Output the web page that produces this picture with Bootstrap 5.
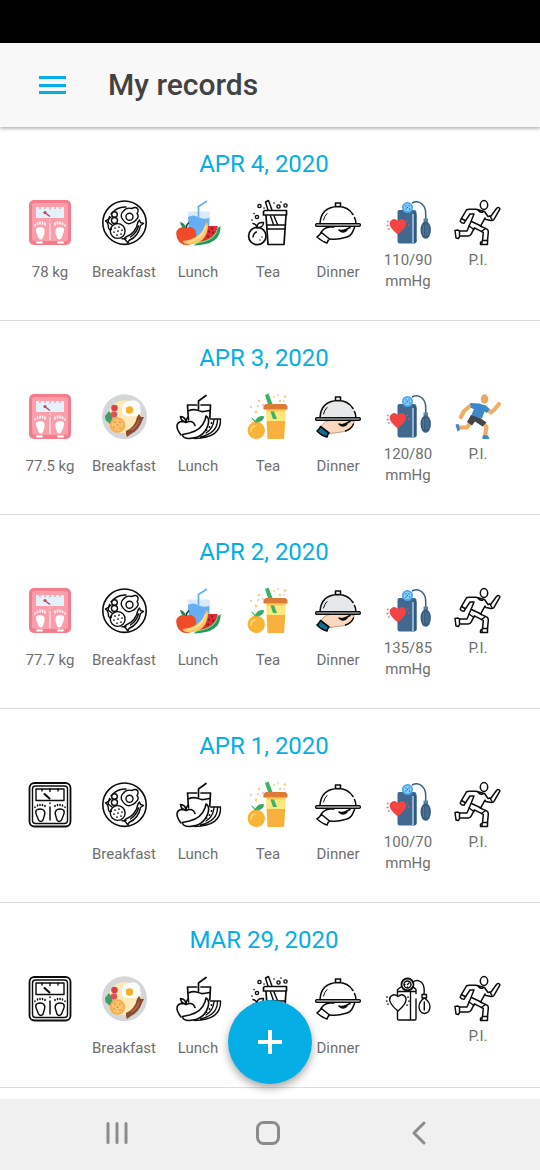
<!DOCTYPE html>
<html lang="en">
<head>
<meta charset="utf-8">
<meta name="viewport" content="width=device-width, initial-scale=1">
<title>My records</title>
<link href="https://cdn.jsdelivr.net/npm/bootstrap@5.3.0/dist/css/bootstrap.min.css" rel="stylesheet">
<style>
  :root { --accent: #05aee4; }
  body { font-family: Roboto, "Liberation Sans", sans-serif; background: #fff; color: #6f6f6f; }
  .status-strip { height: 43px; background: #000; }
  .app-header { height: 84px; background: #f8f8f8; padding-left: 36px; gap: 39px; box-shadow: 0 1px 4px rgba(0,0,0,.4); }
  .app-title { font-size: 30px; line-height: 36px; font-weight: 500; color: #424242; }
  .icon-btn { background: none; border: 0; padding: 0; line-height: 0; }
  .day { padding: 21px 27px 28px 15px; border-bottom: 1px solid #dcdcdc; }
  .day-title { font-size: 24px; line-height: 32px; font-weight: 400; color: var(--accent); margin-bottom: 19px; }
  .day-grid { display: grid; grid-template-columns: 35fr 39fr repeat(5, 35fr); }
  .entry { display: flex; flex-direction: column; align-items: center; text-align: center; font-size: 15px; line-height: 21px; white-space: nowrap; }
  .entry svg { width: 48px; height: 48px; margin-bottom: 3px; }
  .low { margin-top: 12px; }
  .fab { position: fixed; left: 50%; bottom: 86px; margin-left: -42px; width: 84px; height: 84px; border-radius: 50%; background: var(--accent); box-shadow: 0 4px 8px rgba(0,0,0,.35); z-index: 5; }
  .system-nav { height: 71px; background: #f0f0f0; padding: 0 45px 4px 41px; }
  .ln { fill: none; stroke: #0c0c0c; stroke-width: 1.4; stroke-linecap: round; stroke-linejoin: round; }
</style>
</head>
<body>

<svg width="0" height="0" class="position-absolute" aria-hidden="true">
  <defs>
    <!-- bathroom scale -->
    <g id="feet">
      <path d="M10.500 29q3.500-2 7 0q2 2 1 5l-1.500 5q-2 3-4.500 0l-2-5q-1.500-3 0-5z"/>
      <path d="M37.500 29q-3.500-2-7 0q-2 2-1 5l1.500 5q2 3 4.500 0l2-5q1.500-3 0-5z"/>
    </g>
    <symbol id="scale-c" viewBox="0 0 48 48">
      <rect x="3" y="1" width="42" height="45" rx="5" fill="#f47c8b"/>
      <rect x="6" y="4" width="36" height="38" rx="3" fill="#fc9dab"/>
      <rect x="10" y="8" width="28" height="11" fill="#e2f1fa"/>
      <path d="M14 8v2M19 8v2M24 8v2.500M29 8v2M34 8v2" stroke="#f07b8c" fill="none"/>
      <path d="M18 13l6 4.500" stroke="#c94660" stroke-width="1.500"/><circle cx="19" cy="13.500" r="1.600" fill="#c94660"/>
      <use href="#feet" fill="#fff"/>
      <path d="M9 27v-1M11.500 25.500v-1.500M14 25v-2M16.500 25v-2M19 26v-2M29 26v-2M31.500 25v-2M34 25v-2M36.500 25.500v-1.500M39 27v-1" stroke="#fff" stroke-width="1.500" stroke-linecap="round"/>
      <path d="M24 24v17M24 20.500v1.500" stroke="#ffe9ec" stroke-width="1.300"/>
      <path d="M11 43.500h5M32 43.500h5" stroke="#fff" stroke-width="1.800" stroke-linecap="round"/>
    </symbol>
    <symbol id="scale-o" viewBox="0 0 48 48">
      <g class="ln">
        <rect x="3.500" y="2" width="41" height="43.500" rx="5" stroke-width="1.800"/>
        <rect x="6.500" y="5" width="35" height="37.500" rx="3"/>
        <rect x="10" y="8" width="28" height="11.500"/>
        <path d="M16 8v2M24 8v2.500M32 8v2"/><path d="M18.500 13l5 4.500" stroke-width="2"/>
        <use href="#feet"/>
        <path d="M9 26.500v-.5M11.500 25v-1M14 24.500v-1M16.500 24.500v-1M19 25.500v-1M29 25.500v-1M31.500 24.500v-1M34 24.500v-1M36.500 25v-1M39 26.500v-.5M24 22v.5M24 26v13" stroke-width="1.500"/>
      </g>
    </symbol>

    <!-- breakfast plate -->
    <symbol id="breakfast-o" viewBox="0 0 48 48">
      <g class="ln">
        <circle cx="24.500" cy="23.700" r="21.700" stroke-width="1.600"/>
        <path d="M11 15q6-7.500 15-7M9.500 17.500q-1 2.500-1.200 5M26 39.500q-2 .6-4 .3"/>
        <circle cx="29.500" cy="17.700" r="3.500"/>
        <path d="M23.500 12q3-4 8-2.500l3-1q3-.5 3.500 2.500q.5 2-1 3.500q2.500 3-.5 6t-4 3q-4 2.500-7 0t-4-5q-1-4 2-6.500z"/>
        <circle cx="14.500" cy="15.500" r="2.800"/><circle cx="14.500" cy="21.500" r="3"/>
        <path d="M11 18q-3 3-5.500 4q3 2 3 7q1.500 3 3 1M8 23l4 3"/>
        <circle cx="17.700" cy="32" r="7.400"/>
        <path d="M15 29v.1M19 28v.1M22 31v.1M18 32v.1M14 33v.1M21 35v.1M17 36v.1" stroke-width="1.700"/>
        <path d="M26 38q10-4 12-15l1.500-2l1 2.500l3 1l-3 2q-2 11-11.500 15l-1 2.500l-2-2.500l-2-2zM30.500 38q6-4 8-11"/>
      </g>
    </symbol>
    <symbol id="breakfast-c" viewBox="0 0 48 48">
      <circle cx="24.500" cy="23.700" r="22.500" fill="#d4d6d8"/>
      <circle cx="24.500" cy="23.700" r="16.500" fill="#fbeab8"/>
      <path d="M9 18q3 3 4 10q-3 5-5 1q-3-1-3-6z" fill="#459a67"/>
      <circle cx="14.500" cy="15" r="3.300" fill="#d9404b"/><circle cx="14" cy="21.500" r="3.200" fill="#e35252"/>
      <path d="M22 14q2-6 8-6q5-2 8 1t2 6q2 4-1 7q-5 2-9 1q-6 1-8-4z" fill="#fff"/>
      <circle cx="29.500" cy="17" r="3.800" fill="#f8b227"/>
      <circle cx="17.500" cy="32" r="7.700" fill="#f5ad4d"/><circle cx="17.500" cy="32" r="6" fill="#fdc26b"/>
      <path d="M15 29v.1M20 29v.1M17.500 32v.1M14 34v.1M20 35v.1" stroke="#d68132" stroke-width="1.600" stroke-linecap="round"/>
      <path d="M26 38q9-4 11-14l2-3l2 3h3l-2 4q-3 9-11 13l-4 3l-1-3z" fill="#8c4b31"/>
      <path d="M31 37q6-3 8-10" stroke="#b0694b" fill="none" stroke-width="1.500"/>
    </symbol>

    <!-- lunch: juice and fruit -->
    <symbol id="lunch-c" viewBox="0 0 48 48">
      <path d="M13.500 12.500h22.500l-1.500 27h-19z" fill="#d9ebfa"/>
      <path d="M14 18q5-3 10 0t11.500 1l-1 21h-19z" fill="#66aef3"/>
      <path d="M24.500 18V7.500L33 2" fill="none" stroke="#66aef3" stroke-width="1.700"/>
      <path d="M46.500 27q1 19-27 19.500z" fill="#1d9a61"/><path d="M44 27.500q0 14-21 17l11-18z" fill="#86d36b"/>
      <path d="M43.500 27q-1 13-19 16l10-16z" fill="#e02d3b"/>
      <path d="M38 29v1M35 32v1M39 33v1M34 37v1" stroke="#501923" stroke-width="1.300" stroke-linecap="round"/>
      <path d="M12 29q7-3 10 4q2 10-7 13q-9 1-12-7q-3-9 5-11q3 0 4 1z" fill="#f04b28"/>
      <path d="M12 29q0-3 3-5.500" fill="none" stroke="#213d31" stroke-width="1.600"/>
      <path d="M6 23q5 1 6 6q-5 0-6-6z" fill="#1d8b57"/>
      <path d="M32 23q3 2 1.500 8q-3 14-19 14.500q-5-.5-6-3.500q15-1 22-13z" fill="#fcc665"/>
      <path d="M31.500 27q-3 13-18 16" stroke="#ffdf91" fill="none" stroke-width="1.500"/>
    </symbol>
    <symbol id="lunch-o" viewBox="0 0 48 48">
      <g class="ln">
        <path d="M24.500 16V8L32 2.500M13.500 12h9M27 12h9.500l-.7 13M13.500 12l1 15M14 18q5-2 8.500-1t5 1.500t8-1" stroke-width="1.700"/>
        <path d="M36.500 26H46.500q1 19-26 19.500M43.500 27q0 13-17 17M40 27q-1 9-8 13"/>
        <path d="M37.500 30v.2M35.500 34v.2M32.500 37v.2" stroke-width="1.800"/>
        <path d="M7 42q-8-11 0-13.500q3 0 5 1q7-3 9 3M12 29q0-3 2-5M12 29q-5-.5-5.500-5.500q5 .5 5.500 5.500" stroke-width="1.600"/>
        <path d="M32 23q4 2 2 9q-4 13-19 13.500q-6 0-6.500-4l7-1.500q12-3 15.500-13z" stroke-width="1.600"/>
      </g>
    </symbol>

    <!-- tea: cup with straw and orange -->
    <symbol id="tea-o" viewBox="0 0 48 48">
      <g class="ln" stroke-width="1.600">
        <path d="M20.500 11.500h22v4.500h-23v-3.500zM22 16.500l2 29h16l2-29M23 26h18M23 30h18" style="stroke-width:1.700"/>
        <path d="M24 11l-2.500-8l3-1.500l3.500 9.500M26.500 17l3 8.500M30 17l3.500 8.500"/>
        <circle cx="13.300" cy="37" r="8.700" style="stroke-width:1.700"/>
        <path d="M13 28q0-5 6.500-4.500q0 5-6.500 5.500q-.5-4-4-4.500M9 38q.5-4 3.500-5M16 41v.1M18 38v.1"/>
        <circle cx="15.500" cy="7" r="1.600"/><circle cx="34.500" cy="7.500" r="1.600"/><circle cx="41.500" cy="6.500" r="1.600"/><circle cx="13" cy="18" r="1.600"/>
        <path d="M8 21v.1M20 9v.1M10 14.500v.1M37 3v.1M30 4v.1" style="stroke-width:1.600"/>
      </g>
    </symbol>
    <symbol id="tea-c" viewBox="0 0 48 48">
      <path d="M22 16h20l-2 30H23.500z" fill="#fce87d"/><path d="M22.700 28h18.500L40 46H23.500z" fill="#f8b13f"/>
      <path d="M24 11l-3-9l3.500-1.500l4 10.500zM26 17l3 9h4l-3.500-9z" fill="#3ab267"/>
      <path d="M21.500 11h20l2 2v3.500h-24V13z" fill="#db7b35"/><path d="M23 17h18v1.500H23z" fill="#f7ca53"/>
      <circle cx="12.300" cy="37.300" r="8.700" fill="#f9b437"/>
      <path d="M7 38q0-4 4-5" fill="none" stroke="#ffdc79" stroke-width="1.700" stroke-linecap="round"/>
      <path d="M11 29q2-6 8.500-5.500q0 5.500-8.500 5.500zM11 29q-1-3-3.500-4" fill="#36ad65" stroke="#36ad65"/>
      <g fill="#f8cf75"><circle cx="15" cy="8" r="1.200"/><circle cx="36" cy="8" r="1.200"/><circle cx="41" cy="3.500" r="1.300"/><circle cx="12" cy="19" r="1.400"/><circle cx="30" cy="4" r=".9"/></g>
      <g fill="#efafc2"><circle cx="7" cy="14" r=".9"/><circle cx="19" cy="12" r=".9"/><circle cx="34" cy="2" r=".8"/><circle cx="14" cy="13" r=".9"/><circle cx="40" cy="8" r=".8"/></g>
    </symbol>

    <!-- dinner: cloche on a hand -->
    <g id="cloche" class="ln">
      <path d="M21.500 7V4h5v3M40.500 18.500q1.500 3 1.300 6M6 24.500Q7 8 24 7.500q10 0 15 8" stroke-width="1.600"/>
      <path d="M9.500 21q1-4 3.500-6.500" stroke-width="1"/>
    </g>
    <symbol id="dinner-o" viewBox="0 0 48 48">
      <use href="#cloche"/>
      <g class="ln">
        <rect x="1.700" y="24.700" width="44.600" height="2.600" rx="1" fill="#fff"/>
        <path d="M7 33.500q3-5 9-5.500h4M16 40q8 1 15-1.500q6-1 8-6.500l1.500-3.500M25 31q3 1.500 7-.5l4-2M25 31q4 4 8 0" stroke-width="1.600"/>
        <path d="M7.500 33.500l8 6.500q-1.500 1-2.500 4q-4-1-10-6q2-1.500 4.500-4.500z" stroke-width="1.600"/>
      </g>
    </symbol>
    <symbol id="dinner-c" viewBox="0 0 48 48">
      <path d="M6 24.500Q7 8 24 7.500t18 17z" fill="#e7e8e9"/>
      <use href="#cloche"/>
      <g class="ln">
        <path d="M7 34q3-6 9-6.500h16l8.500 1l-2 4q-2 5-8 6t-15 2z" fill="#fbd7bd" stroke="#c99b80" stroke-width="1"/>
        <path d="M25 31q3 1.500 7-.5l4-2M25 31q4 4 8 0M39.500 31q-2 5-8 7"/>
        <rect x="1.700" y="24.700" width="44.600" height="2.600" rx="1" fill="#d9dadb"/>
        <path d="M6.500 33.500l8.500 6.500q-1.500 1-2 4q-5-1-10-6q2-1.500 3.500-4.500z" fill="#146d96" stroke-width="1.600"/>
      </g>
    </symbol>

    <!-- blood pressure monitor -->
    <symbol id="bp-c" viewBox="0 0 48 48">
      <path d="M28 4q6-3 10 1t3.700 10v6" fill="none" stroke="#39607f" stroke-width="1.500"/>
      <path d="M15 11h15q2.500 0 2.500 3v28q0 2.500-2.500 2.500H15.500q-2 0-2-2.500V13q0-2 1.500-2z" fill="#41688f"/>
      <path d="M13.500 15h16V12l3 3v28l-3 1.500V15" fill="#315a80"/>
      <path d="M29 15v29" stroke="#bfe0f4" stroke-width="1.300"/>
      <circle cx="23.500" cy="8.500" r="5.500" fill="#4ca5ec"/><circle cx="23.500" cy="8.500" r="3.800" fill="#85d1ff"/>
      <path d="M22 7v.1M25 7v.1M22 10v.1M25.500 10v.1M23.500 8.500v.1" stroke="#176ac5" stroke-width="1.300" stroke-linecap="round"/>
      <path d="M39.500 19.500h4.500V23h-4.500z" fill="#5285ac"/><ellipse cx="41.700" cy="31" rx="5.200" ry="8.700" fill="#375d80"/>
      <path d="M39.500 26v10M42 25v12M44 26v10" stroke="#527ba0"/>
      <path d="M14 35.500Q3 27 6.500 22q3.500-4 7.500 0q4-4 7.500 0q3 5-7.500 13.500z" fill="#f34343"/>
      <path d="M4.500 22.500H2.500M4.500 26.500H2M5.500 30H3.500M23 22h2M24 26h2" stroke="#dc5262" stroke-width="1.400" stroke-dasharray="1.300 .8"/>
    </symbol>
    <symbol id="bp-o" viewBox="0 0 48 48">
      <g class="ln" transform="translate(2 0)">
        <circle cx="21.500" cy="9.500" r="6" stroke-width="1.800"/><circle cx="21.500" cy="9.500" r="3.500"/>
        <path d="M21.500 9.500l1.500-1.500M18.500 9.500h.5M21.500 12v.3"/>
        <path d="M27 7q4-3 8 0t3 12M15 12l-3.500 2.500V20M11.500 16.500H30M28 12.500l2 2v4M11.500 36v8q0 1 1.500 1h16q1 0 1-1.500V24M24.500 17v27M28 12.500h-2"/>
        <path d="M36 19.500h4.500V23H36zM38.300 23q-5.500 4-5.300 9q.5 6 5.500 6.500q5-.5 5.500-6.500q0-5-5.700-9M38.300 27v8"/>
        <path d="M12 36Q1 27 4.500 21.500q4-3.500 7.500 0q4-3.500 7 0q4 5-7 14.500z" fill="#fff"/>
        <path d="M1 22v.1M0.800 26v.1M2 29v.1M22 22v.1M23 26v.1M21 30v.1" stroke-width="1.700"/>
      </g>
    </symbol>

    <!-- physical activity: runner -->
    <symbol id="run-o" viewBox="0 0 48 48">
      <g class="ln" style="stroke-width:1.500">
        <ellipse cx="30" cy="6" rx="3.700" ry="4.400"/>
        <path d="M15 10.300h7l8.500 2.200l3.500 5l3-.5l5.500-7.500q2-2 3.500.3l-6 10.500q-1 1.500-3 1.300l-5-1l-1-1.500l-4.500 8l6.500 3q1.500 1 1.300 3l-.8 8.500v3.800h-7v-2l2-1.500l.8-8.500l-9-4.500l-3 6q-1 2-3 2H6l-1.500 2.500L2 39l-1-7.500l3-.5l1.500 1h7.500l4-9.500l3-7.500h-4l-5 7.500l-1 1.800q-2.500 0-3.800-2l1.300-3l5-8.500z"/>
        <path d="M17.500 22.500l7.500 3.500l2.500 1.500M15 27l5 3.500M27.500 32.500l4-3M5.500 32v4.500M29 41.500h4.500M7.500 19.500l3.500 2M36 17l2 3.500M28 43.500v1M24 11q2 3 5 2"/>
      </g>
    </symbol>
    <symbol id="run-c" viewBox="0 0 48 48">
      <ellipse cx="30.500" cy="6" rx="3.800" ry="4.700" fill="#e8a765"/>
      <g fill="none" stroke="#f0ad69" stroke-width="4.200" stroke-linecap="round" stroke-linejoin="round">
        <path d="M16 13l-6 5l-3 6M33 16l4 3.500l3-2.500l5-6M17 29l-4 5.500H5M30 31l2.500 3l-1.500 9"/>
      </g>
      <path d="M16 10l9 .5l7 2l3.500 4l-2.500 3.500l-2.500-1.500l-2.500 7L17 23l3-7l-3-1z" fill="#3b88cc"/>
      <path d="M17 22l10 3.500l5.500 4l-4 4l-7.500-5l-3 4l-5-3.500z" fill="#434549"/>
      <path d="M1.500 31.500l3-.5l1.500 6l-2.500 1.500zM28.500 46v-3l1.500-1l4 .5l1.500 3.500z" fill="#3b88cc"/>
    </symbol>
  </defs>
</svg>

<div class="d-flex flex-column min-vh-100">
  <div class="status-strip"></div>
  <header class="app-header d-flex align-items-center">
    <button type="button" class="icon-btn" aria-label="Open menu">
      <svg width="33" height="24" viewBox="0 0 33 24" fill="#05aee4"><path d="M3 3h27v3H3zM3 11h27v3H3zM3 18h27v3H3z"/></svg>
    </button>
    <h1 class="app-title mb-0">My records</h1>
  </header>

  <main>
    <section class="day">
      <h2 class="day-title text-center">APR 4, 2020</h2>
      <div class="day-grid">
        <div class="entry"><svg><use href="#scale-c"/></svg><span class="low">78 kg</span></div>
        <div class="entry"><svg><use href="#breakfast-o"/></svg><span class="low">Breakfast</span></div>
        <div class="entry"><svg><use href="#lunch-c"/></svg><span class="low">Lunch</span></div>
        <div class="entry"><svg><use href="#tea-o"/></svg><span class="low">Tea</span></div>
        <div class="entry"><svg><use href="#dinner-o"/></svg><span class="low">Dinner</span></div>
        <div class="entry"><svg><use href="#bp-c"/></svg><span>110/90<br>mmHg</span></div>
        <div class="entry"><svg><use href="#run-o"/></svg><span>P.I.</span></div>
      </div>
    </section>

    <section class="day">
      <h2 class="day-title text-center">APR 3, 2020</h2>
      <div class="day-grid">
        <div class="entry"><svg><use href="#scale-c"/></svg><span class="low">77.5 kg</span></div>
        <div class="entry"><svg><use href="#breakfast-c"/></svg><span class="low">Breakfast</span></div>
        <div class="entry"><svg><use href="#lunch-o"/></svg><span class="low">Lunch</span></div>
        <div class="entry"><svg><use href="#tea-c"/></svg><span class="low">Tea</span></div>
        <div class="entry"><svg><use href="#dinner-c"/></svg><span class="low">Dinner</span></div>
        <div class="entry"><svg><use href="#bp-c"/></svg><span>120/80<br>mmHg</span></div>
        <div class="entry"><svg><use href="#run-c"/></svg><span>P.I.</span></div>
      </div>
    </section>

    <section class="day">
      <h2 class="day-title text-center">APR 2, 2020</h2>
      <div class="day-grid">
        <div class="entry"><svg><use href="#scale-c"/></svg><span class="low">77.7 kg</span></div>
        <div class="entry"><svg><use href="#breakfast-o"/></svg><span class="low">Breakfast</span></div>
        <div class="entry"><svg><use href="#lunch-c"/></svg><span class="low">Lunch</span></div>
        <div class="entry"><svg><use href="#tea-c"/></svg><span class="low">Tea</span></div>
        <div class="entry"><svg><use href="#dinner-c"/></svg><span class="low">Dinner</span></div>
        <div class="entry"><svg><use href="#bp-c"/></svg><span>135/85<br>mmHg</span></div>
        <div class="entry"><svg><use href="#run-o"/></svg><span>P.I.</span></div>
      </div>
    </section>

    <section class="day">
      <h2 class="day-title text-center">APR 1, 2020</h2>
      <div class="day-grid">
        <div class="entry"><svg><use href="#scale-o"/></svg></div>
        <div class="entry"><svg><use href="#breakfast-o"/></svg><span class="low">Breakfast</span></div>
        <div class="entry"><svg><use href="#lunch-o"/></svg><span class="low">Lunch</span></div>
        <div class="entry"><svg><use href="#tea-c"/></svg><span class="low">Tea</span></div>
        <div class="entry"><svg><use href="#dinner-o"/></svg><span class="low">Dinner</span></div>
        <div class="entry"><svg><use href="#bp-c"/></svg><span>100/70<br>mmHg</span></div>
        <div class="entry"><svg><use href="#run-o"/></svg><span>P.I.</span></div>
      </div>
    </section>

    <section class="day">
      <h2 class="day-title text-center">MAR 29, 2020</h2>
      <div class="day-grid">
        <div class="entry"><svg><use href="#scale-o"/></svg></div>
        <div class="entry"><svg><use href="#breakfast-c"/></svg><span class="low">Breakfast</span></div>
        <div class="entry"><svg><use href="#lunch-o"/></svg><span class="low">Lunch</span></div>
        <div class="entry"><svg><use href="#tea-o"/></svg></div>
        <div class="entry"><svg><use href="#dinner-o"/></svg><span class="low">Dinner</span></div>
        <div class="entry"><svg><use href="#bp-o"/></svg></div>
        <div class="entry"><svg><use href="#run-o"/></svg><span>P.I.</span></div>
      </div>
    </section>
  </main>

  <button type="button" class="icon-btn fab" aria-label="Add record">
    <svg width="26" height="26" viewBox="0 0 26 26" fill="none" stroke="#fff" stroke-width="4"><path d="M13 1v24M1 13h24"/></svg>
  </button>

  <nav class="system-nav d-flex align-items-center mt-auto" aria-label="System">
    <button type="button" class="icon-btn flex-fill" aria-label="Recent apps">
      <svg width="26" height="26" viewBox="0 0 26 26" stroke="#8b8b8b" stroke-width="3" stroke-linecap="round"><path d="M4 3.500v19M13 3.500v19M22 3.500v19"/></svg>
    </button>
    <button type="button" class="icon-btn flex-fill" aria-label="Home">
      <svg width="26" height="26" viewBox="0 0 26 26" fill="none" stroke="#8b8b8b" stroke-width="3"><rect x="2.500" y="2.500" width="21" height="21" rx="6"/></svg>
    </button>
    <button type="button" class="icon-btn flex-fill" aria-label="Back">
      <svg width="26" height="26" viewBox="0 0 26 26" fill="none" stroke="#8b8b8b" stroke-width="3" stroke-linecap="round" stroke-linejoin="round"><path d="M18 3L8 13l10 10"/></svg>
    </button>
  </nav>
</div>

<script src="https://cdn.jsdelivr.net/npm/bootstrap@5.3.0/dist/js/bootstrap.bundle.min.js"></script>
</body>
</html>
